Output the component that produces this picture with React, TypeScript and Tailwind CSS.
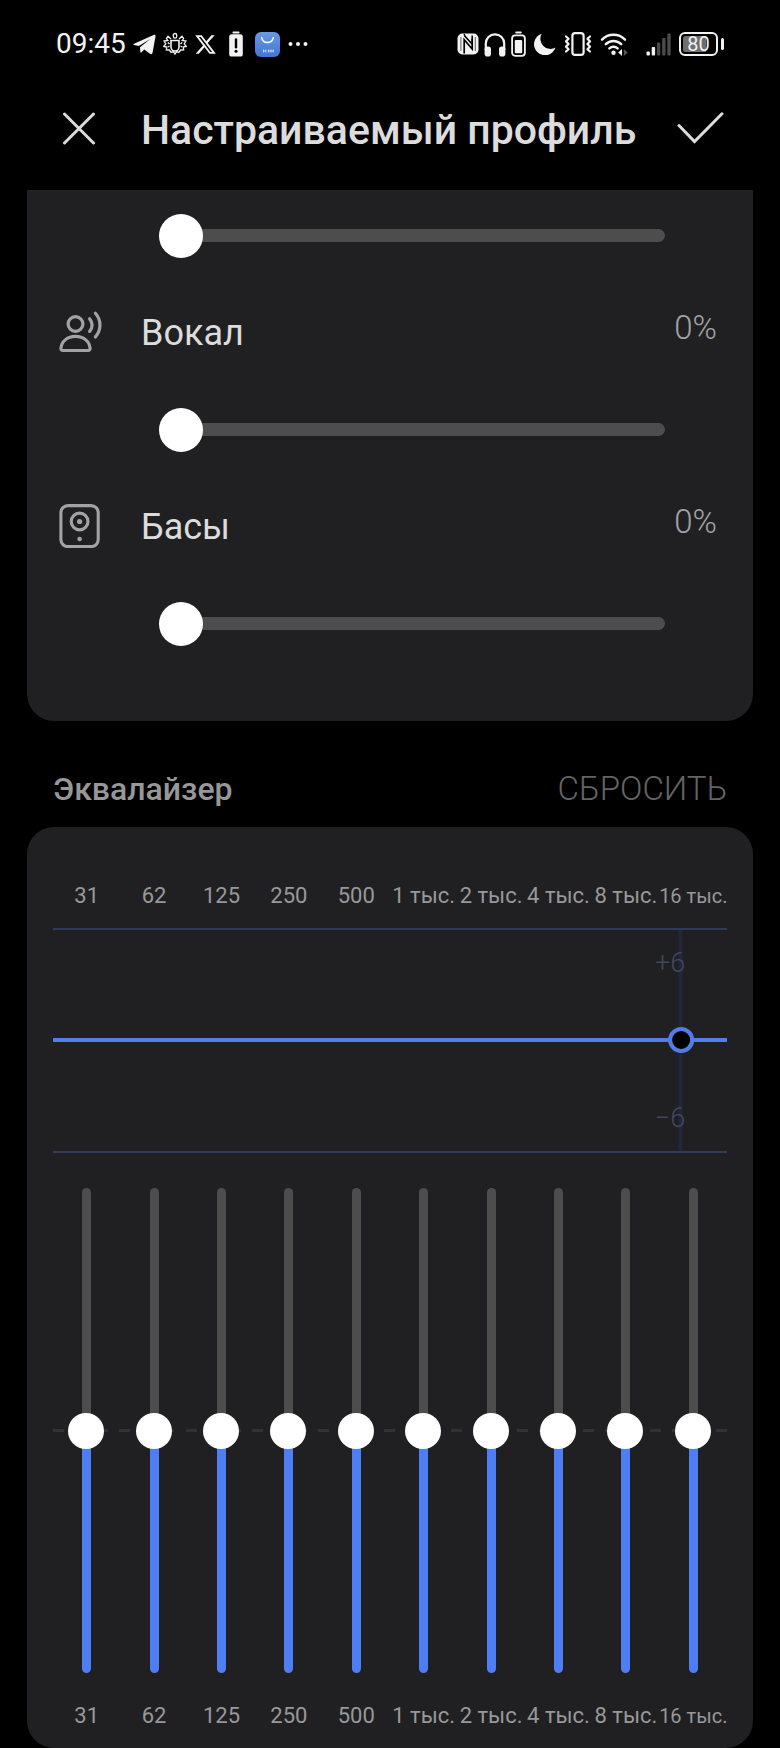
import { useState } from 'react'
import { FaXTwitter } from 'react-icons/fa6'

interface Band {
  id: string
  label: string
  small?: boolean
}

const BANDS: Array<Band> = [
  { id: '31', label: '31' },
  { id: '62', label: '62' },
  { id: '125', label: '125' },
  { id: '250', label: '250' },
  { id: '500', label: '500' },
  { id: '1k', label: '1 тыс.' },
  { id: '2k', label: '2 тыс.' },
  { id: '4k', label: '4 тыс.' },
  { id: '8k', label: '8 тыс.' },
  { id: '16k', label: '16 тыс.', small: true },
]

const DASHES = Array.from({ length: 31 }, (_, i) => i)

const TelegramIcon = () => (
  <svg width="23" height="21" viewBox="0 0 23 21">
    <path
      d="M1 9.800 20.600 1c1.300-.5 2.100.1 1.900 1.500L19.600 18.600c-.3 1.600-1.300 2-2.600 1.200l-5.700-4.200-2.800 2.700c-.6.6-1.100.3-1.200-.5L7 13.200 17.300 5 5.800 11.900 1 10.900c-.7-.2-.7-.8 0-1.100z"
      fill="#f2f2f2"
    />
  </svg>
)

const HiveIcon = () => (
  <svg width="24" height="24" viewBox="0 0 24 24" fill="none" stroke="#f2f2f2" strokeWidth="1.3">
    <rect x="10.3" y="1.5" width="3.4" height="4.6" rx="1.7" />
    <path d="M8 8.500h8v6.500a4 4 0 0 1-8 0z" strokeWidth="1.600" />
    <path d="M8 7 5 4.200 3.400 6.500l1.400 2L1 9l1.800 3L.8 14.400l3 .6-.5 2.800 3 .2L8 20.200l2.600-.4L12 22l1.400-2.200 2.600.4 1.700-2.200 3-.2-.5-2.800 3-.6-2-2.400L23 9l-3.800-.5 1.400-2L19 4.200 16 7" />
    <path d="M4.800 10.500 6.500 12M4.800 15 6.500 14M19.200 10.500 17.500 12M19.200 15 17.500 14" />
  </svg>
)

const BatteryAlertIcon = () => (
  <svg width="24" height="26" viewBox="0 0 24 26">
    <rect x="8.5" y="0.5" width="7" height="2" rx="0.8" fill="#f2f2f2" />
    <rect x="5.2" y="3.2" width="13.6" height="22.3" rx="2.6" fill="#f2f2f2" />
    <path d="M12 8.500v7.800" stroke="#000" strokeWidth="2.4" strokeLinecap="round" />
    <circle cx="12" cy="20.2" r="1.5" fill="#000" />
  </svg>
)

const AppGalleryIcon = () => (
  <svg width="25" height="25" viewBox="0 0 25 25">
    <defs>
      <linearGradient id="gallery" x1="0" y1="0" x2="0" y2="1">
        <stop offset="0" stopColor="#6a9ae4" />
        <stop offset="1" stopColor="#3f76d6" />
      </linearGradient>
    </defs>
    <rect width="25" height="25" rx="6" fill="url(#gallery)" />
    <path d="M6.800 5.800a5.800 5.800 0 0 0 11.400 0" fill="none" stroke="#fff" strokeWidth="1.5" strokeLinecap="round" />
    <path d="M8.500 17.500v3M11 17.500v3M13.500 17.500v3M16 17.500v3M18.300 17.500v3M8.500 19h2.500M13.500 19h4.800" stroke="#dbe7fb" strokeWidth="0.8" />
  </svg>
)

const MoreIcon = () => (
  <svg width="22" height="6" viewBox="0 0 22 6" fill="#f2f2f2">
    <circle cx="3.5" cy="3" r="2" />
    <circle cx="11" cy="3" r="2" />
    <circle cx="18.5" cy="3" r="2" />
  </svg>
)

const NfcIcon = () => (
  <svg width="22" height="22" viewBox="0 0 22 22">
    <rect x="0.5" y="0.5" width="21" height="21" rx="5" fill="#f2f2f2" />
    <path d="M7.200 20.500V6.800l8 9.200V5.500" fill="none" stroke="#000" strokeWidth="1.700" />
    <path d="M7.200 1l.6 2 7.400 8.200V2.500" fill="none" stroke="#000" strokeWidth="1.500" />
    <path d="M3.900 4v14M18.300 4v14" stroke="#000" strokeWidth="0.600" />
  </svg>
)

const HeadphonesIcon = () => (
  <svg width="22" height="25" viewBox="0 0 22 25">
    <path d="M1.800 18v-6.500a9.200 9.200 0 0 1 18.400 0V18" fill="none" stroke="#f2f2f2" strokeWidth="2.200" />
    <rect x="0.6" y="14.5" width="6.4" height="10" rx="2.8" fill="#f2f2f2" />
    <rect x="15" y="14.5" width="6.4" height="10" rx="2.8" fill="#f2f2f2" />
  </svg>
)

const HeadsetBatteryIcon = () => (
  <svg width="15" height="26" viewBox="0 0 15 26">
    <rect x="4.3" y="0.5" width="6.4" height="2" rx="0.8" fill="#f2f2f2" />
    <rect x="1.1" y="4.4" width="12.8" height="20.4" rx="3" fill="none" stroke="#f2f2f2" strokeWidth="1.8" />
    <rect x="3.8" y="9" width="7.4" height="13.2" rx="1" fill="#f2f2f2" />
  </svg>
)

const MoonIcon = () => (
  <svg width="22" height="22" viewBox="0 0 22 22">
    <path d="M7.600.8A11 11 0 1 0 21.500 14.600 10.200 10.200 0 0 1 7.600.8z" fill="#f2f2f2" />
  </svg>
)

const VibrateIcon = () => (
  <svg width="28" height="24" viewBox="0 0 28 24" fill="none" stroke="#f2f2f2" strokeLinejoin="round" strokeLinecap="round">
    <rect x="8.4" y="1.1" width="11.2" height="21.8" rx="2.6" strokeWidth="2.2" />
    <path d="M2 4.500l2.600 2.300L2 9.400 4.600 12 2 14.600l2.600 2.600L2 19.500" strokeWidth="2.2" />
    <path d="M26 4.500l-2.600 2.300L26 9.400 23.400 12l2.600 2.600-2.600 2.600 2.600 2.300" strokeWidth="2.2" />
  </svg>
)

const WifiIcon = () => (
  <svg width="38" height="24" viewBox="0 0 38 24">
    <g fill="none" stroke="#f2f2f2" strokeWidth="2.5" strokeLinecap="round">
      <path d="M2 7.600a16.200 16.200 0 0 1 23 0" />
      <path d="M5.800 12.200a10.800 10.800 0 0 1 15.400 0" />
      <path d="M9.400 16.300a5.900 5.900 0 0 1 8.200 0" />
    </g>
    <circle cx="13.5" cy="20.8" r="2.2" fill="#f2f2f2" />
    <path d="M22 17v7l-3.800-3.500z" fill="#f2f2f2" />
    <path d="M23.800 17v7l4-3.500z" fill="#555" />
  </svg>
)

const SignalIcon = () => (
  <svg width="25" height="24" viewBox="0 0 25 24">
    <rect x="0.5" y="19.5" width="3.4" height="4" rx="1" fill="#f2f2f2" />
    <rect x="5.7" y="15" width="3.4" height="8.5" rx="1" fill="#f2f2f2" />
    <rect x="10.9" y="10.5" width="3.4" height="13" rx="1" fill="#4a4a4a" />
    <rect x="16.1" y="6" width="3.4" height="17.5" rx="1" fill="#4a4a4a" />
    <rect x="21.3" y="1.5" width="3.4" height="22" rx="1" fill="#4a4a4a" />
  </svg>
)

const VocalIcon = () => (
  <svg width="44" height="44" viewBox="0 0 44 44" fill="none" stroke="#a3a3a5" strokeWidth="3.2" strokeLinecap="round" strokeLinejoin="round">
    <circle cx="16.5" cy="14" r="7.4" />
    <path d="M1.900 38.400C2.600 31 8.600 26.400 16.500 26.400S30.400 31 31.100 38.400c.1 1.300-.8 2.100-2 2.100H3.900c-1.200 0-2.100-.8-2-2.100z" />
    <path d="M30.600 8.800c3.200 4 3.200 8.600 0 12.600" />
    <path d="M36.400 3.200c6.100 7 6.100 16.200 0 23.800" />
  </svg>
)

const BassIcon = () => (
  <svg width="44" height="44" viewBox="0 0 44 44">
    <g fill="none" stroke="#a3a3a5" strokeWidth="3.1">
      <rect x="1.9" y="1.6" width="37.3" height="41" rx="7" />
      <circle cx="20.6" cy="17.5" r="8.4" />
    </g>
    <circle cx="20.6" cy="17.5" r="2.6" fill="#a3a3a5" />
    <circle cx="20.6" cy="35" r="2.3" fill="#a3a3a5" />
  </svg>
)

const StatusBar = () => (
  <div className="flex h-22 items-center justify-between px-14">
    <div className="flex items-center gap-[7px]">
      <span className="text-[28px] leading-8 text-[#f2f2f2]">09:45</span>
      <TelegramIcon />
      <HiveIcon />
      <FaXTwitter size={23} color="#f2f2f2" />
      <BatteryAlertIcon />
      <AppGalleryIcon />
      <MoreIcon />
    </div>
    <div className="flex items-center gap-2">
      <div className="flex items-center gap-[5px]">
        <NfcIcon />
        <HeadphonesIcon />
        <HeadsetBatteryIcon />
      </div>
      <MoonIcon />
      <VibrateIcon />
      <WifiIcon />
      <SignalIcon />
      <div className="flex items-center gap-[3px]">
        <div className="flex h-6 w-[39px] items-center justify-center rounded-[6px] border-2 border-[#f2f2f2] bg-linear-to-r from-[#6e6e6e] from-75% to-black to-75% bg-origin-content p-[2px] text-[20px] leading-5 text-[#f2f2f2] [background-clip:content-box]">
          80
        </div>
        <div className="h-3 w-[3px] rounded-sm bg-[#f2f2f2]" />
      </div>
    </div>
  </div>
)

const Header = () => (
  <header className="mb-5 flex h-[82px] items-center pr-14 pl-[62px] text-[#dcdcdc]">
    <button type="button" aria-label="Закрыть">
      <svg width="34" height="34" viewBox="0 0 34 34" fill="none" stroke="currentColor" strokeWidth="3" strokeLinecap="round">
        <path d="M2.500 2l29 29M31.500 2l-29 29" />
      </svg>
    </button>
    <h1 className="ml-[45px] grow pt-0.5 text-[41px] leading-12 font-medium whitespace-nowrap">Настраиваемый профиль</h1>
    <button type="button" aria-label="Сохранить">
      <svg width="48" height="34" viewBox="0 0 48 34" fill="none" stroke="currentColor" strokeWidth="3" strokeLinecap="round">
        <path d="M3 13.500L18.500 29.500 46 1.800" />
      </svg>
    </button>
  </header>
)

interface LevelSliderProps {
  id: string
  label?: string
  value: number
  onChange: (value: number) => void
}

const LevelSlider = ({ id, label, value, onChange }: LevelSliderProps) => (
  <div className="flex pr-[88px] pl-33">
    <input
      id={id}
      type="range"
      aria-label={label}
      value={value}
      onChange={e => onChange(Number(e.target.value))}
      className="h-11 w-full appearance-none bg-transparent [&::-webkit-slider-runnable-track]:h-[13px] [&::-webkit-slider-runnable-track]:rounded-full [&::-webkit-slider-runnable-track]:bg-[#4d4d4d] [&::-webkit-slider-thumb]:-mt-[15px] [&::-webkit-slider-thumb]:size-11 [&::-webkit-slider-thumb]:appearance-none [&::-webkit-slider-thumb]:rounded-full [&::-webkit-slider-thumb]:bg-white"
    />
  </div>
)

const BandLabels = ({ tied }: { tied?: boolean }) => (
  <div className="grid h-8 grid-cols-10 items-center text-[#98989a]">
    {BANDS.map(band => {
      const Tag = tied ? 'label' : 'span'
      return (
        <Tag key={band.id} htmlFor={tied ? `band-${band.id}` : undefined} className="flex justify-center leading-8 whitespace-nowrap">
          <span className={band.small ? 'text-[20px]' : 'text-[22px]'}>{band.label}</span>
        </Tag>
      )
    })}
  </div>
)

const Curve = () => (
  <svg className="mt-4 h-[225px] w-full" role="img" aria-label="Кривая эквалайзера">
    <rect x="92.8%" width="4" height="224" fill="#232739" />
    <line x1="0" x2="100%" y1="1" y2="1" stroke="#2f3b59" strokeWidth="2" />
    <line x1="0" x2="100%" y1="224" y2="224" stroke="#2f3b59" strokeWidth="2" />
    <text x="93.8%" y="44" textAnchor="end" fontSize="27" fontWeight="300" fill="#404763">
      +6
    </text>
    <text x="93.8%" y="199" textAnchor="end" fontSize="27" fontWeight="300" fill="#404763">
      −6
    </text>
    <line x1="0" x2="100%" y1="112" y2="112" stroke="#527ce6" strokeWidth="4" />
    <circle cx="93.2%" cy="112" r="11" fill="#000" stroke="#527ce6" strokeWidth="4" />
  </svg>
)

const App = () => {
  const [treble, setTreble] = useState(0)
  const [vocal, setVocal] = useState(0)
  const [bass, setBass] = useState(0)
  const [gains, setGains] = useState<Array<number>>(BANDS.map(() => 50))

  const setGain = (index: number, value: number) => setGains(gains.map((gain, i) => (i === index ? value : gain)))

  const rows = [
    { id: 'vocal', name: 'Вокал', icon: <VocalIcon />, value: vocal, onChange: setVocal },
    { id: 'bass', name: 'Басы', icon: <BassIcon />, value: bass, onChange: setBass },
  ]

  return (
    <div className="min-h-screen bg-black font-[Roboto,'Noto_Sans',sans-serif]">
      <StatusBar />
      <Header />
      <main className="px-[27px]">
        <section className="rounded-b-[27px] bg-[#202022] pt-[23px] pb-[76px]">
          <LevelSlider id="treble" label="Высокие" value={treble} onChange={setTreble} />
          {rows.map(row => (
            <div key={row.id}>
              <div className="flex h-[150px] items-center pr-9 pl-8">
                {row.icon}
                <label htmlFor={row.id} className="ml-[38px] grow pt-0.5 text-[36px] leading-12 text-[#dcdcdc]">
                  {row.name}
                </label>
                <span className="pb-2 text-[33px] leading-10 font-[350] text-[#a3a3a5]">{row.value}%</span>
              </div>
              <LevelSlider id={row.id} value={row.value} onChange={row.onChange} />
            </div>
          ))}
        </section>

        <div className="flex h-[106px] items-center justify-between px-[26px] pt-[30px]">
          <h2 className="text-[32px] leading-10 font-medium text-[#979797]">Эквалайзер</h2>
          <button type="button" className="text-[33px] leading-10 font-[350] text-[#646464]" onClick={() => setGains(BANDS.map(() => 50))}>
            СБРОСИТЬ
          </button>
        </div>

        <section className="rounded-[27px] bg-[#202022] px-[26px] pt-[53px] pb-4">
          <BandLabels />
          <Curve />
          <div className="mt-[35px] mb-[27px] grid">
            <div className="col-start-1 row-start-1 flex items-center justify-between">
              {DASHES.map(dash => (
                <span key={dash} className="h-[3px] w-[11px] bg-[#323234]" />
              ))}
            </div>
            <div className="col-start-1 row-start-1 grid grid-cols-10 justify-items-center">
              {BANDS.map((band, i) => (
                <input
                  key={band.id}
                  id={`band-${band.id}`}
                  type="range"
                  value={gains[i]}
                  onChange={e => setGain(i, Number(e.target.value))}
                  style={{ '--fill': `${gains[i]}%` } as React.CSSProperties}
                  className="h-[485px] w-9 appearance-none bg-transparent [direction:rtl] [writing-mode:vertical-lr] [&::-webkit-slider-runnable-track]:w-[9px] [&::-webkit-slider-runnable-track]:rounded-full [&::-webkit-slider-runnable-track]:bg-[linear-gradient(to_top,#4f7df3_var(--fill),#4d4d4d_var(--fill))] [&::-webkit-slider-thumb]:-ml-[14px] [&::-webkit-slider-thumb]:size-9 [&::-webkit-slider-thumb]:appearance-none [&::-webkit-slider-thumb]:rounded-full [&::-webkit-slider-thumb]:bg-white"
                />
              ))}
            </div>
          </div>
          <BandLabels tied />
        </section>
      </main>
    </div>
  )
}

export default App
